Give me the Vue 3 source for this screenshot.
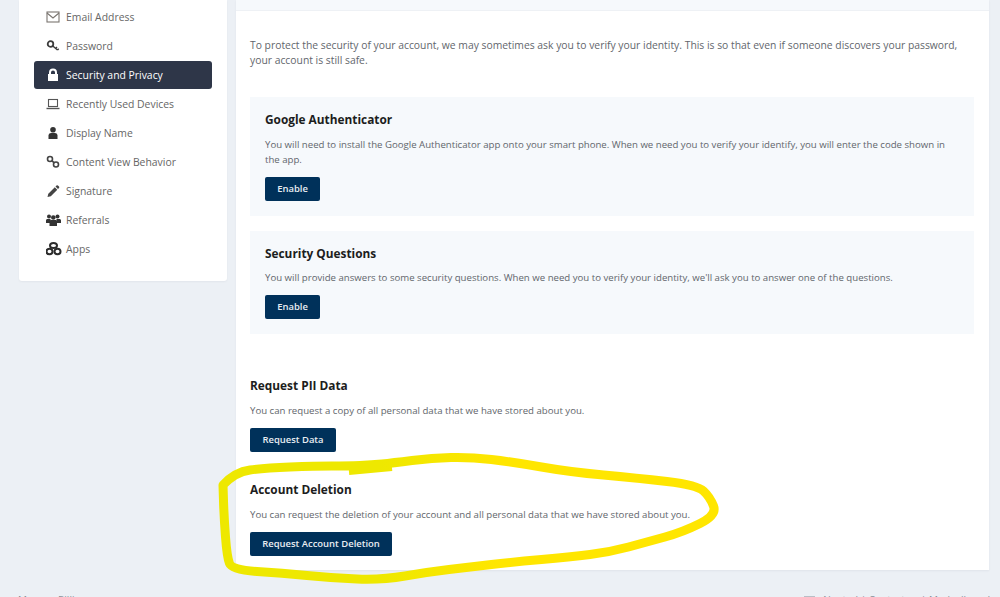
<script setup>
const menu = [
  { label: 'Email Address', icon: 'mail' },
  { label: 'Password', icon: 'key' },
  { label: 'Security and Privacy', icon: 'lock', active: true },
  { label: 'Recently Used Devices', icon: 'laptop' },
  { label: 'Display Name', icon: 'user' },
  { label: 'Content View Behavior', icon: 'link' },
  { label: 'Signature', icon: 'pencil' },
  { label: 'Referrals', icon: 'users' },
  { label: 'Apps', icon: 'cubes' },
]

const points = [
  [223, 485], [235, 472], [265, 468], [315, 466], [348, 466], [372, 465], [392, 463], [432, 458],
  [470, 457], [513, 462], [570, 472], [637, 478], [697, 485], [710, 497], [717, 515], [683, 532],
  [647, 542], [610, 552], [570, 557], [513, 562], [470, 567], [428, 572], [382, 580], [332, 578],
  [282, 573], [232, 570], [227, 557], [224, 517], [223, 485],
]

function smooth(pts) {
  let d = `M${pts[0][0]} ${pts[0][1]}`
  for (let i = 1; i < pts.length - 1; i++) {
    const mx = (pts[i][0] + pts[i + 1][0]) / 2
    const my = (pts[i][1] + pts[i + 1][1]) / 2
    d += `Q${pts[i][0]} ${pts[i][1]} ${mx} ${my}`
  }
  const last = pts[pts.length - 1]
  return `${d}L${last[0]} ${last[1]}`
}

const scribble = smooth(points)
</script>

<template>
  <div class="page">
    <div class="columns">
      <aside class="sidebar">
        <a v-for="item in menu" :key="item.label" class="row" :class="{ active: item.active }">
          <span class="icon">
            <svg width="16" height="14" viewBox="0 0 16 14">
              <g v-if="item.icon === 'mail'" fill="none" stroke="#7a7570" stroke-width="1.1">
                <rect x="1" y="2" width="12" height="10" />
                <path d="M1 3 7 8l6-5" />
              </g>
              <g v-else-if="item.icon === 'key'" fill="none" stroke="#3c3c3c" stroke-width="1.8">
                <circle cx="4.5" cy="5" r="2.800" />
                <path d="M6.800 7 11.500 11M9.500 9.500l1.500-1.500M11.500 11l1.200-1.200" stroke-width="1.400" />
              </g>
              <path v-else-if="item.icon === 'lock'" fill="#fff" d="M3 6V4.500a4 4 0 0 1 8 0V6h1v7H2V6zm2 0h4V4.500a2 2 0 0 0-4 0z" />
              <g v-else-if="item.icon === 'laptop'" fill="none" stroke="#555" stroke-width="1.100">
                <rect x="2.500" y="2.500" width="9" height="7" />
                <path d="M.5 11.500h13" stroke-width="1.400" />
              </g>
              <g v-else-if="item.icon === 'user'" fill="#333">
                <circle cx="7" cy="3.800" r="2.800" />
                <path d="M2.500 13V9.500C2.500 7.800 4 7 5 7h4c1 0 2.500.8 2.500 2.500V13z" />
              </g>
              <g v-else-if="item.icon === 'link'" fill="none" stroke="#444" stroke-width="1.600">
                <circle cx="4" cy="4" r="2.500" />
                <circle cx="10" cy="9.500" r="2.500" />
                <path d="M6 5.800 8 7.700" />
              </g>
              <path v-else-if="item.icon === 'pencil'" fill="#444" d="M1.500 13l.8-3.300 6.500-6.500 2.500 2.500-6.500 6.500zM9.500 2.500l1-1a1 1 0 0 1 1.400 0L13 2.600a1 1 0 0 1 0 1.400l-1 1z" />
              <g v-else-if="item.icon === 'users'" fill="#333">
                <circle cx="3" cy="3.500" r="2" />
                <circle cx="11.500" cy="3.500" r="2" />
                <circle cx="7.300" cy="4.500" r="2.300" />
                <path d="M0 10V7.500C0 6.500.8 6 1.500 6h3v4zM15 10V7.500c0-1-.8-1.500-1.500-1.500h-3v4z" />
                <path d="M3.500 13V8.500C3.500 7.500 4.300 7 5 7h4.500c.8 0 1.500.5 1.500 1.500V13z" />
              </g>
              <g v-else fill="#fff" stroke="#2c2c2c" stroke-width="2">
                <ellipse cx="7.500" cy="3.500" rx="3.500" ry="2.500" />
                <ellipse cx="3.500" cy="9.500" rx="3" ry="2.800" />
                <ellipse cx="11.500" cy="9.500" rx="3" ry="2.800" />
              </g>
            </svg>
          </span>
          <span>{{ item.label }}</span>
        </a>
      </aside>

      <main class="card">
        <div class="band"></div>
        <div class="body">
          <p class="intro">To protect the security of your account, we may sometimes ask you to verify your identity. This is so that even if someone discovers your password, your account is still safe.</p>

          <section class="box first">
            <h3>Google Authenticator</h3>
            <p>You will need to install the Google Authenticator app onto your smart phone. When we need you to verify your identify, you will enter the code shown in the app.</p>
            <button>Enable</button>
          </section>

          <section class="box second">
            <h3>Security Questions</h3>
            <p>You will provide answers to some security questions. When we need you to verify your identity, we'll ask you to answer one of the questions.</p>
            <button>Enable</button>
          </section>

          <section class="plain pii">
            <h3>Request PII Data</h3>
            <p>You can request a copy of all personal data that we have stored about you.</p>
            <button>Request Data</button>
          </section>

          <section class="plain deletion">
            <h3>Account Deletion</h3>
            <p>You can request the deletion of your account and all personal data that we have stored about you.</p>
            <button>Request Account Deletion</button>
          </section>
        </div>
      </main>
    </div>

    <footer class="foot">
      <span>Manage Billing</span>
      <span class="foot-right"><i class="foot-icon"></i>Neutral | Contact us | Mark all read</span>
    </footer>

    <svg class="scribble" width="1000" height="597" viewBox="0 0 1000 597">
      <defs>
        <linearGradient id="ink" gradientUnits="userSpaceOnUse" x1="380" y1="0" x2="500" y2="0">
          <stop offset="0" stop-color="#eee800" />
          <stop offset="1" stop-color="#ffe600" />
        </linearGradient>
      </defs>
      <g fill="none" stroke="url(#ink)" stroke-linecap="round" stroke-linejoin="round">
        <path stroke-width="9" :d="scribble" />
        <path stroke-width="6" stroke-linecap="butt" d="M349 472 392 468" />
      </g>
    </svg>
  </div>
</template>

<style>
html, body { margin: 0; background: #ecf0f5; }
</style>

<style scoped>
.page {
  position: relative;
  width: 1000px;
  height: 597px;
  overflow: hidden;
  background: #ecf0f5;
  font-family: "Open Sans", "Liberation Sans", sans-serif;
  font-size: 9.65px;
  color: #62666c;
}
.columns {
  display: flex;
  align-items: flex-start;
  gap: 9px;
  padding-left: 19px;
}
.sidebar {
  width: 208px;
  height: 281px;
  box-sizing: border-box;
  padding: 3px 15px 0;
  background: #fff;
  border-radius: 0 0 3px 3px;
  box-shadow: 0 1px 2px rgba(30, 40, 60, 0.05);
}
.row {
  display: flex;
  align-items: center;
  height: 28px;
  margin-bottom: 1px;
  padding-left: 12px;
  border-radius: 3px;
  color: #666;
  font-size: 10.4px;
}
.row.active {
  background: #2e3648;
  color: #fff;
}
.icon {
  display: flex;
  width: 20px;
  flex: none;
}
.card {
  width: 753px;
  height: 570px;
  background: #fff;
  box-shadow: 0 1px 2px rgba(30, 40, 60, 0.06);
}
.band {
  height: 10px;
  background: #f6f9fc;
  border-bottom: 1px solid #eef1f5;
}
.body {
  padding: 27px 15px 0 14px;
}
.intro {
  margin: 0 0 29px;
  font-size: 10.35px;
  line-height: 15px;
}
.box {
  background: #f6f9fc;
  padding: 14px 15px 15px;
  margin-bottom: 15px;
}
h3 {
  margin: 0;
  font-size: 11.85px;
  line-height: 17px;
  font-weight: 700;
  color: #1c1d20;
}
.box p, .plain p {
  margin: 9px 0 10px;
  line-height: 15px;
}
.second p { margin: 8px 0 10px; }
.plain.pii { margin-top: 43px; }
.plain.deletion { margin-top: 29px; }
button {
  display: block;
  height: 24px;
  width: 55px;
  padding: 0 0 1px;
  border: 0;
  border-radius: 2px;
  background: #00315a;
  color: #e8edf2;
  font-family: inherit;
  font-size: 9.45px;
  font-weight: 600;
}
.pii button { width: 86px; }
.deletion button { width: 142px; }
.foot {
  position: absolute;
  left: 18px;
  right: 10px;
  top: 593px;
  display: flex;
  justify-content: space-between;
  font-size: 10px;
  color: #8a8f98;
}
.foot-icon {
  display: inline-block;
  width: 11px;
  height: 8px;
  margin-right: 8px;
  background: #b9bec6;
}
.scribble {
  position: absolute;
  left: 0;
  top: 0;
  pointer-events: none;
}
</style>
